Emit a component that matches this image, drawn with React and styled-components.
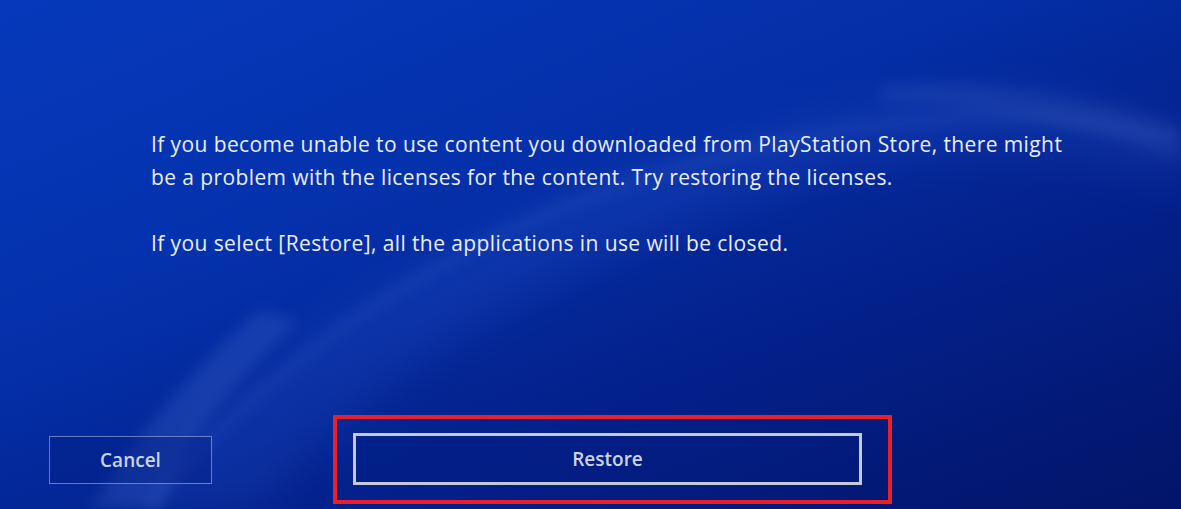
import styled, { createGlobalStyle } from "styled-components";

const GlobalStyle = createGlobalStyle`
    html, body, #root {
        margin: 0;
        padding: 0;
        width: 100%;
        height: 100%;
    }
    body {
        background: #0430a8;
        overflow: hidden;
    }
`;

const StyledScreen = styled.div`
    position: relative;
    display: flex;
    flex-direction: column;
    width: 100%;
    height: 100vh;
    overflow: hidden;
    background: linear-gradient(160deg, #0539bb 0%, #0538bd 35%, #0428a0 70%, #031a78 100%);
    font-family: "Open Sans", "Noto Sans", sans-serif;
`;

const StyledBackdrop = styled.svg`
    position: absolute;
    inset: 0;
    width: 100%;
    height: 100%;
    pointer-events: none;
`;

const StyledMessage = styled.div`
    position: relative;
    max-width: 930px;
    padding: 128px 0 0 151px;
`;

const StyledParagraph = styled.p`
    margin: 0 0 33px;
    font-size: 21px;
    line-height: 33px;
    color: #e9edf9;
    font-weight: 400;
    letter-spacing: 0.4px;
`;

const StyledButtonRow = styled.div`
    position: relative;
    display: flex;
    flex-direction: row;
    align-items: center;
    margin-top: auto;
    padding: 0 0 5px 49px;
`;

const StyledButton = styled.div`
    display: flex;
    align-items: center;
    justify-content: center;
    box-sizing: border-box;
    width: ${({$width}) => $width}px;
    height: ${({$height}) => $height}px;
    font-size: 19px;
    font-weight: 600;
    color: #ccd3e8;
    background: rgba(4, 28, 130, 0.35);
    border: ${({$focused}) => $focused ? "3px solid #c4cad9" : "1px solid rgba(200, 210, 240, 0.5)"};
`;

const StyledHighlight = styled.div`
    margin-left: 121px;
    padding: 14px 26px 15px 16px;
    border: 4px solid #e8202c;
`;

function Backdrop() {
    return (
        <StyledBackdrop viewBox="0 0 1181 509" preserveAspectRatio="none">
            <defs>
                <filter id="blur" x="-20%" y="-20%" width="140%" height="140%">
                    <feGaussianBlur stdDeviation="20"/>
                </filter>
                <filter id="soft" x="-20%" y="-20%" width="140%" height="140%">
                    <feGaussianBlur stdDeviation="7"/>
                </filter>
                <linearGradient id="shade" x1="0" y1="0" x2="1" y2="1">
                    <stop offset="0" stopColor="#020f5a" stopOpacity="0"/>
                    <stop offset="1" stopColor="#020f5a" stopOpacity="0.5"/>
                </linearGradient>
            </defs>
            <path d="M120 509 C 260 330, 520 180, 820 110 C 960 80, 1080 90, 1181 130 L 1181 190 C 1060 140, 920 140, 780 190 C 560 260, 360 380, 260 509 Z"
                  fill="#3d74ff" opacity="0.2" filter="url(#blur)"/>
            <path d="M150 509 C 250 380, 420 250, 640 180 C 800 130, 980 90, 1181 140"
                  stroke="#7aa4ff" strokeWidth="12" fill="none" opacity="0.12" filter="url(#soft)"/>
            <path d="M880 85 C 980 75, 1100 100, 1181 125 L 1181 165 C 1090 125, 990 105, 880 102 Z"
                  fill="#8fb0ff" opacity="0.12" filter="url(#soft)"/>
            <path d="M90 509 C 140 430, 190 370, 260 310 L 300 320 C 230 385, 185 440, 160 509 Z"
                  fill="#6d9bff" opacity="0.22" filter="url(#soft)"/>
            <rect x="0" y="0" width="1181" height="509" fill="url(#shade)"/>
        </StyledBackdrop>
    );
}

function App() {
    return (
        <StyledScreen>
            <GlobalStyle/>
            <Backdrop/>
            <StyledMessage>
                <StyledParagraph>
                    If you become unable to use content you downloaded from PlayStation Store, there might
                    be a problem with the licenses for the content. Try restoring the licenses.
                </StyledParagraph>
                <StyledParagraph>
                    If you select [Restore], all the applications in use will be closed.
                </StyledParagraph>
            </StyledMessage>
            <StyledButtonRow>
                <StyledButton $width={163} $height={48}>Cancel</StyledButton>
                <StyledHighlight>
                    <StyledButton $width={509} $height={52} $focused>Restore</StyledButton>
                </StyledHighlight>
            </StyledButtonRow>
        </StyledScreen>
    );
}

export default App;
